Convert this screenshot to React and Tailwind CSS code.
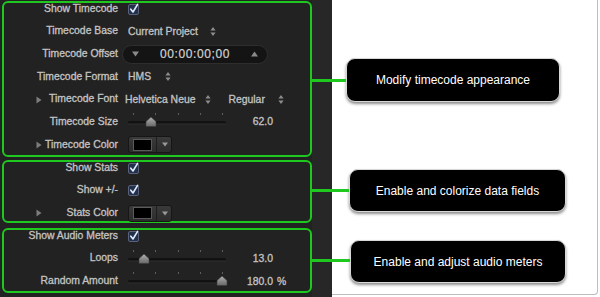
import React from 'react';

const font = { fontFamily: '"Liberation Sans", Arial, sans-serif' };

function Stepper() {
  return (
    <svg width="6" height="9" viewBox="0 0 6 9" className="shrink-0">
      <path d="M3 0L5.6 3.4H0.4Z M3 9L0.4 5.6H5.6Z" fill="#8c8c8c" />
    </svg>
  );
}

function Tri() {
  return (
    <svg width="6" height="8" viewBox="0 0 6 8" className="shrink-0">
      <path d="M0.5 0.5L5.5 4L0.5 7.5Z" fill="#7c7c7c" />
    </svg>
  );
}

function Check() {
  return (
    <span className="relative flex h-[11px] w-[11px] items-center justify-center rounded-[2px] border border-[#58627c] bg-[#22304a]">
      <svg width="10" height="11" viewBox="0 0 10 11" className="absolute -top-[2px] left-0">
        <path d="M1.8 6.2L4 9L8.6 1.4" stroke="#e2ebff" strokeWidth="1.6" fill="none" strokeLinecap="round" strokeLinejoin="round" />
      </svg>
    </span>
  );
}

function Slider({ pos }) {
  return (
    <svg width="100" height="18" viewBox="0 0 100 18" className="shrink-0">
      <defs>
        <linearGradient id={`th${pos}`} x1="0" y1="0" x2="0" y2="1">
          <stop offset="0" stopColor="#b0b0b0" />
          <stop offset="1" stopColor="#686868" />
        </linearGradient>
      </defs>
      {[5, 27, 50, 72, 94].map((x) => (
        <rect key={x} x={x} y="0" width="1" height="2" fill="#5e5e5e" />
      ))}
      <rect x="0" y="8" width="98" height="3" rx="1.5" fill="#121212" />
      <rect x="0" y="10.5" width="98" height="1" fill="#2e2e2e" />
      <path
        d={`M${pos - 5} 13.5H${pos + 5}V8.5L${pos} 4L${pos - 5} 8.5Z`}
        fill={`url(#th${pos})`}
        stroke="#3a3a3a"
        strokeWidth="0.6"
      />
    </svg>
  );
}

function ColorWell() {
  return (
    <div className="flex h-[17px] w-[44px] items-center rounded-[3px] border border-[#161616] bg-gradient-to-b from-[#3a3a3a] to-[#2c2c2c]">
      <div className="ml-[4px] h-[12px] w-[19px] border border-[#5a5a5a] bg-black" />
      <div className="ml-[4px] h-full w-px bg-[#1e1e1e]" />
      <svg width="6" height="5" viewBox="0 0 6 5" className="ml-[5px]">
        <path d="M0 0.5H6L3 4.5Z" fill="#9a9a9a" />
      </svg>
    </div>
  );
}

function Row({ label, tri, children }) {
  return (
    <div className="flex h-[12px] items-center">
      <div className={tri ? 'flex w-[114px] items-center justify-between pl-[32px]' : 'flex w-[114px] items-center justify-end'}>
        {tri && <Tri />}
        <span className="whitespace-nowrap leading-none">{label}</span>
      </div>
      <div className="ml-[10px] flex items-center">{children}</div>
    </div>
  );
}

function Callout({ text, className }) {
  return (
    <div
      className={`flex items-center justify-center rounded-[9px] border border-[#d8d8d8] bg-black text-[12px] text-white shadow-[0_2px_3px_rgba(0,0,0,0.45)] ${className}`}
    >
      {text}
    </div>
  );
}

export default function App() {
  return (
    <div className="flex h-[297px] w-[600px] overflow-hidden bg-white" style={font}>
      {/* Inspector panel */}
      <div className="flex h-full w-[332px] shrink-0 bg-[#222222]">
        <div className="flex w-[312px] flex-col pl-[2px] pt-[1px] text-[10.4px] text-[#c4c4c4] [-webkit-text-stroke:0.3px_#c4c4c4]">
          {/* Timecode group */}
          <div className="relative flex h-[156px] flex-col gap-[10.67px] rounded-[6px] border-[2.5px] border-[#1ec81e]">
            <div className="absolute left-full top-[76px] h-[3px] w-[36px] bg-[#1ec81e]" />
            <Row label="Show Timecode">
              <Check />
            </Row>
            <Row label="Timecode Base">
              <span className="mr-[12px] whitespace-nowrap">Current Project</span>
              <Stepper />
            </Row>
            <Row label="Timecode Offset">
              <div className="-ml-[6px] flex h-[19px] w-[146px] items-center justify-between rounded-full border border-[#2e2e2e] bg-[#141414] px-[9px]">
                <svg width="7" height="6" viewBox="0 0 7 6">
                  <path d="M0 0.5H7L3.5 5.5Z" fill="#8a8a8a" />
                </svg>
                <span className="text-[12px] tracking-[0.6px] text-[#d2d2d2] [-webkit-text-stroke:0.2px_#d2d2d2]">00:00:00;00</span>
                <svg width="7" height="6" viewBox="0 0 7 6">
                  <path d="M0 5.5H7L3.5 0.5Z" fill="#8a8a8a" />
                </svg>
              </div>
            </Row>
            <Row label="Timecode Format">
              <span className="mr-[14px]">HMS</span>
              <Stepper />
            </Row>
            <Row label="Timecode Font" tri>
              <span className="-ml-[3px] mr-[10px] whitespace-nowrap">Helvetica Neue</span>
              <Stepper />
              <span className="ml-[17px] mr-[13px]">Regular</span>
              <Stepper />
            </Row>
            <Row label="Timecode Size">
              <Slider pos={23} />
              <span className="ml-[17px] w-[28px] text-right">62.0</span>
            </Row>
            <Row label="Timecode Color" tri>
              <ColorWell />
            </Row>
          </div>

          {/* Stats group */}
          <div className="relative mt-[3px] flex h-[63px] flex-col gap-[10.67px] rounded-[6px] border-[2.5px] border-[#1ec81e]">
            <div className="absolute left-full top-[27px] h-[3px] w-[39px] bg-[#1ec81e]" />
            <Row label="Show Stats">
              <Check />
            </Row>
            <Row label="Show +/-">
              <Check />
            </Row>
            <Row label="Stats Color" tri>
              <ColorWell />
            </Row>
          </div>

          {/* Audio group */}
          <div className="relative mt-[5px] flex h-[65px] flex-col gap-[10.67px] rounded-[6px] border-[2.5px] border-[#1ec81e]">
            <div className="absolute left-full top-[29px] h-[3px] w-[40px] bg-[#1ec81e]" />
            <Row label="Show Audio Meters">
              <Check />
            </Row>
            <Row label="Loops">
              <Slider pos={16} />
              <span className="ml-[17px] w-[28px] text-right">13.0</span>
            </Row>
            <Row label="Random Amount">
              <Slider pos={94} />
              <span className="ml-[17px] w-[28px] text-right">180.0</span>
              <span className="ml-[4px]">%</span>
            </Row>
          </div>
        </div>
        <div className="flex-1 bg-[#272727]" />
      </div>

      {/* Annotation area */}
      <div className="flex h-[295px] w-[266px] shrink-0 flex-col rounded-br-[4px] border-b border-r border-[#bdbdbd] bg-white">
        <Callout text="Modify timecode appearance" className="ml-[14px] mt-[58px] h-[44px] w-[214px]" />
        <Callout text="Enable and colorize data fields" className="ml-[17px] mt-[67px] h-[43px] w-[217px]" />
        <Callout text="Enable and adjust audio meters" className="ml-[18px] mt-[28px] h-[43px] w-[216px]" />
      </div>
    </div>
  );
}
